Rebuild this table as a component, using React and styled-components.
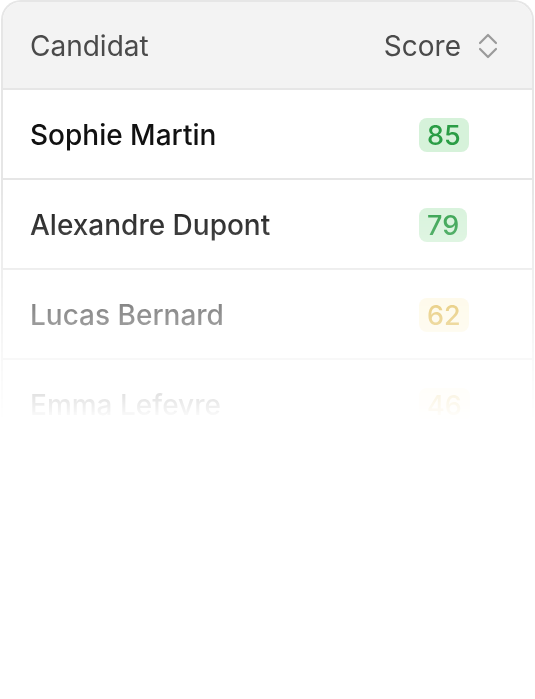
import React from 'react';
import styled, { createGlobalStyle } from 'styled-components';

const GlobalStyle = createGlobalStyle`
  html, body {
    margin: 0;
    padding: 0;
    background: #fff;
  }
  body {
    font-family: Inter, "Noto Sans", "Liberation Sans", sans-serif;
  }
`;

const candidates = [
  { name: 'Sophie Martin', score: 85 },
  { name: 'Alexandre Dupont', score: 79 },
  { name: 'Lucas Bernard', score: 62 },
  { name: 'Emma Lefevre', score: 46 },
];

const tone = (score) => (score >= 70 ? 'good' : 'mid');

const App = () => {
  return (
    <>
      <GlobalStyle />
      <Page>
        <Card>
          <HeaderRow>
            <HeadCell>Candidat</HeadCell>
            <ScoreHead>
              Score
              <SortIcon viewBox="0 0 20 28">
                <path d="M2 11l8-8 8 8M2 17l8 8 8-8" />
              </SortIcon>
            </ScoreHead>
          </HeaderRow>
          {candidates.map((c) => (
            <Row key={c.name}>
              <Name>{c.name}</Name>
              <ScoreCell>
                <Badge $tone={tone(c.score)}>{c.score}</Badge>
              </ScoreCell>
            </Row>
          ))}
        </Card>
      </Page>
    </>
  );
};

export default App;

const Page = styled.div`
  padding: 0 1px;
  height: 422px;
  overflow: hidden;
  -webkit-mask-image: linear-gradient(to bottom, #000 190px, transparent 422px);
  mask-image: linear-gradient(to bottom, #000 190px, transparent 422px);
`;

const Card = styled.div`
  border: 2px solid #e6e6e6;
  border-bottom: none;
  border-radius: 20px 20px 0 0;
  overflow: hidden;
  background: #fff;
`;

const HeaderRow = styled.div`
  display: grid;
  grid-template-columns: 1fr 126px;
  align-items: center;
  height: 88px;
  padding: 2px 34px 0 27px;
  box-sizing: border-box;
  background: #f3f3f3;
  border-bottom: 2px solid #e6e6e6;
`;

const HeadCell = styled.div`
  font-size: 28px;
  font-weight: 400;
  color: #4a4a4a;
`;

const ScoreHead = styled(HeadCell)`
  display: flex;
  align-items: center;
  justify-content: flex-end;
  gap: 17px;
`;

const SortIcon = styled.svg`
  width: 20px;
  height: 28px;
  fill: none;
  stroke: #9a9a9a;
  stroke-width: 2.2;
  stroke-linecap: round;
  stroke-linejoin: round;
`;

const Row = styled.div`
  display: grid;
  grid-template-columns: 1fr 126px;
  align-items: center;
  height: 90px;
  padding: 2px 34px 0 27px;
  box-sizing: border-box;
  border-bottom: 2px solid #e6e6e6;
`;

const Name = styled.div`
  font-size: 28px;
  font-weight: 500;
  color: #111;
`;

const ScoreCell = styled.div`
  display: flex;
  justify-content: flex-start;
  padding-left: 47px;
`;

const Badge = styled.span`
  display: inline-flex;
  align-items: center;
  justify-content: center;
  height: 34px;
  padding: 0 8px;
  border-radius: 8px;
  font-size: 27px;
  font-weight: 500;
  background: ${(p) => (p.$tone === 'good' ? '#d6f2da' : '#fdf6da')};
  color: ${(p) => (p.$tone === 'good' ? '#2a9d45' : '#d6a61c')};
`;
